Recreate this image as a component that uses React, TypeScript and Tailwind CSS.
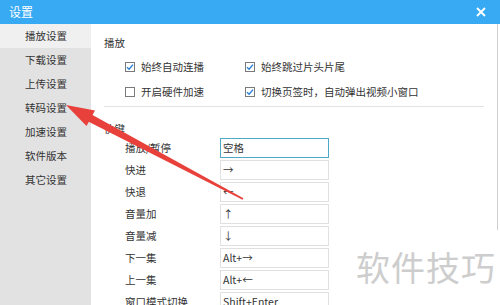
import React from 'react';

const menu = ['播放设置', '下载设置', '上传设置', '转码设置', '加速设置', '软件版本', '其它设置'];

const keys: [string, string][] = [
  ['播放/暂停', '空格'],
  ['快进', '→'],
  ['快退', '←'],
  ['音量加', '↑'],
  ['音量减', '↓'],
  ['下一集', 'Alt+→'],
  ['上一集', 'Alt+←'],
  ['窗口模式切换', 'Shift+Enter'],
];

const Check = ({ on, label }: { on: boolean; label: string }) => (
  <div className="flex items-center gap-[6px]">
    <div className="w-[10px] h-[10px] border border-[#7a7a7a] bg-white flex items-center justify-center">
      {on && (
        <svg width="8" height="8" viewBox="0 0 8 8">
          <path d="M1 4.2 L3.1 6.3 L7 1.6" fill="none" stroke="#2c7fd6" strokeWidth="1.4" />
        </svg>
      )}
    </div>
    <span>{label}</span>
  </div>
);

export default function App() {
  return (
    <div
      className="relative w-[500px] h-[305px] overflow-hidden bg-white flex flex-col text-[10.5px] text-[#333] leading-none"
      style={{ fontFamily: '"Noto Sans CJK SC", "Noto Sans", sans-serif' }}
    >
      <div className="h-[24px] shrink-0 bg-[#38aaf4] flex items-center justify-between pl-[9px] pr-[14px] text-white text-[12px]">
        <span>设置</span>
        <svg width="10" height="10" viewBox="0 0 10 10">
          <path d="M1 1 L9 9 M9 1 L1 9" stroke="white" strokeWidth="1.8" />
        </svg>
      </div>

      <div className="flex flex-1 min-h-0">
        <div className="w-[91px] shrink-0 bg-[#e2e2e2] flex flex-col">
          {menu.map((m, i) => (
            <div
              key={m}
              className={`h-[24px] flex items-center pl-[25px] ${i === 0 ? 'bg-[#f0f0f0]' : ''}`}
            >
              {m}
            </div>
          ))}
        </div>

        <div className="w-[406px] shrink-0 pl-[13px] pt-[14px]">
          <div>播放</div>
          <div className="pl-[21px] mt-[13px] flex flex-col gap-[15px]">
            <div className="flex">
              <div className="w-[120px]"><Check on label="始终自动连播" /></div>
              <Check on label="始终跳过片头片尾" />
            </div>
            <div className="flex">
              <div className="w-[120px]"><Check on={false} label="开启硬件加速" /></div>
              <Check on label="切换页签时，自动弹出视频小窗口" />
            </div>
          </div>
          <div className="mt-[8px] w-[380px] h-px bg-[#e3e3e3]" />

          <div className="mt-[17px]">快键</div>
          <div className="mt-[4px] flex flex-col gap-[2px]">
            {keys.map(([label, val], i) => (
              <div key={label} className="flex items-center">
                <div className="w-[116px] pl-[21px]">{label}</div>
                <div
                  className={`w-[109px] h-[20px] flex items-center px-[2px] border ${
                    i === 0 ? 'border-[#4eaac4]' : 'border-[#e0e0e0]'
                  }`}
                >
                  {val}
                </div>
              </div>
            ))}
          </div>
        </div>

        <div className="flex-1">
          <div className="h-[206px] border-l border-[#cfcfcf]" />
        </div>
      </div>

      <div className="absolute left-[356px] top-[250px] text-[34px] text-[#cdcdcd] tracking-[1px]">
        软件技巧
      </div>

      <svg className="absolute left-0 top-0 pointer-events-none" width="500" height="305">
        <polygon
          points="242.6,199.7 243.4,198.3 89.8,113.6 86.2,120.4"
          fill="#e8413b"
        />
        <polygon points="66,105 95,110.5 86.5,126" fill="#e8413b" />
      </svg>
    </div>
  );
}
